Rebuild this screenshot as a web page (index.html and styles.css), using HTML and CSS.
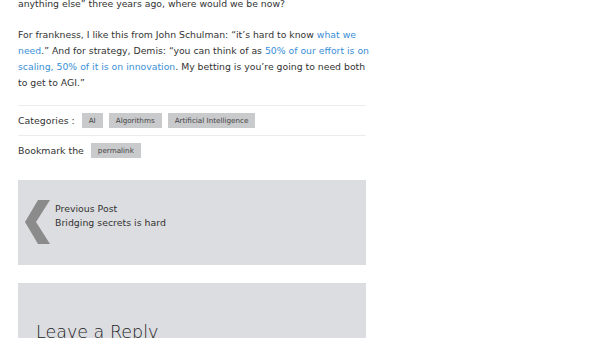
FILE: index.html
```html
<!doctype html>
<html lang="en">

<head>
  <meta charset="UTF-8" />
  <meta name="viewport" content="width=device-width, initial-scale=1.0" />
  <title>Post</title>
  <link rel="stylesheet" href="styles.css">
</head>

<body>
  <div class="container">
    <div class="entry">
      <p class="cut">anything else” three years ago, where would we be now?</p>
      <p>For frankness, I like this from John Schulman: “it’s hard to know <a href="#">what we need</a>.” And for strategy, Demis: “you can think of as <a href="#">50% of our effort is on scaling, 50% of it is on innovation</a>. My betting is you’re going to need both to get to AGI.”</p>
    </div>

    <div class="meta-row">
      Categories :
      <a class="tag" href="#">AI</a>
      <a class="tag" href="#">Algorithms</a>
      <a class="tag" href="#">Artificial Intelligence</a>
    </div>
    <div class="meta-row">
      Bookmark the
      <a class="tag" href="#">permalink</a>
    </div>

    <a class="prev-post" href="#">
      <svg class="chevron" width="26" height="44" viewBox="0 0 26 44">
        <polygon points="13,0 25,0 11,22 25,44 13,44 0,22" fill="#8b8b8b" />
      </svg>
      <span class="prev-text">
        <span>Previous Post</span>
        <span>Bridging secrets is hard</span>
      </span>
    </a>

    <div class="reply">
      <h3>Leave a Reply</h3>
    </div>
  </div>
</body>

</html>
```

FILE: styles.css
```css
body {
  font-family: 'DejaVu Sans', sans-serif;
  background-color: #ffffff;
  color: #333333;
  margin: 0;
  overflow: hidden;
}

.container {
  width: 348px;
  padding-left: 18px;
}

.entry {
  margin-right: -5px;
}

.entry p {
  font-size: 9.3px;
  line-height: 16px;
  margin: 0 0 15px;
}

.entry p.cut {
  margin-top: -4px;
}

.entry a {
  color: #3a8fd6;
  text-decoration: none;
}

.meta-row {
  display: flex;
  align-items: center;
  gap: 6px;
  height: 29px;
  border-top: 1px solid #ececec;
  font-size: 9.4px;
}

.entry + .meta-row {
  margin-top: -1px;
}

.meta-row:last-of-type {
  border-bottom: 1px solid #ececec;
}

.tag {
  background-color: #c9cacc;
  color: #444;
  font-size: 7.2px;
  padding: 4px 7px;
  text-decoration: none;
  line-height: 7px;
}

.meta-row .tag:first-child {
  margin-left: 1px;
}

.prev-post {
  display: flex;
  align-items: flex-start;
  gap: 4px;
  height: 85px;
  margin-top: 15px;
  padding: 20px 0 0 7px;
  box-sizing: border-box;
  background-color: #dcdde0;
  color: #333;
  text-decoration: none;
}

.prev-text {
  display: flex;
  flex-direction: column;
  font-size: 9.4px;
  line-height: 14px;
  padding-top: 2px;
}

.reply {
  margin-top: 18px;
  height: 120px;
  padding: 39px 18px 0;
  background-color: #dcdde0;
}

.reply h3 {
  margin: 0;
  font-size: 17.5px;
  font-weight: 300;
  color: #222;
}
```
